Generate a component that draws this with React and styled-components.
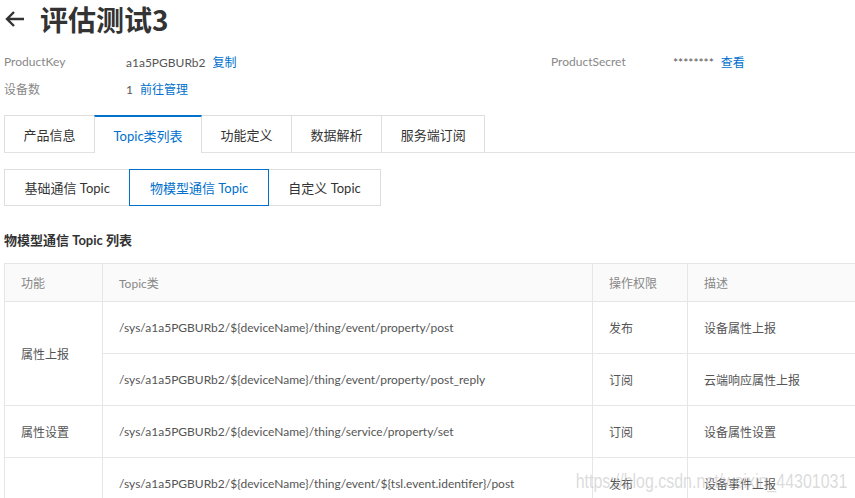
import styled, { createGlobalStyle } from 'styled-components';

const GlobalStyle = createGlobalStyle`
  html, body {
    margin: 0;
    padding: 0;
    background: #fff;
    overflow: hidden;
  }
  body {
    font-family: Lato, 'Noto Sans CJK SC', sans-serif;
    color: #333;
  }
`;

const BLUE = '#0070cc';

const mainTabs = ['产品信息', 'Topic类列表', '功能定义', '数据解析', '服务端订阅'];
const subTabs = ['基础通信 Topic', '物模型通信 Topic', '自定义 Topic'];

const rows = [
  { group: '属性上报', span: 2, topic: '/sys/a1a5PGBURb2/${deviceName}/thing/event/property/post', perm: '发布', desc: '设备属性上报' },
  { topic: '/sys/a1a5PGBURb2/${deviceName}/thing/event/property/post_reply', perm: '订阅', desc: '云端响应属性上报' },
  { group: '属性设置', span: 1, topic: '/sys/a1a5PGBURb2/${deviceName}/thing/service/property/set', perm: '订阅', desc: '设备属性设置' },
  { group: '事件上报', span: 2, topic: '/sys/a1a5PGBURb2/${deviceName}/thing/event/${tsl.event.identifer}/post', perm: '发布', desc: '设备事件上报' },
  { topic: '/sys/a1a5PGBURb2/${deviceName}/thing/event/${tsl.event.identifer}/post_reply', perm: '订阅', desc: '云端响应事件上报' },
];

export default function App() {
  return (
    <>
      <GlobalStyle />
      <Page>
        <TitleRow>
          <BackIcon width="20" height="20" viewBox="0 0 20 20">
            <path d="M19 10H2 M9 3L2 10L9 17" />
          </BackIcon>
          <Title>评估测试3</Title>
        </TitleRow>

        <InfoGrid>
          <Label>ProductKey</Label>
          <Value>
            a1a5PGBURb2<Link>复制</Link>
          </Value>
          <Label>ProductSecret</Label>
          <Value>
            ********<Link>查看</Link>
          </Value>
          <Label>设备数</Label>
          <Value>
            1<Link>前往管理</Link>
          </Value>
        </InfoGrid>

        <TabBar>
          {mainTabs.map((t, i) => (
            <Tab key={t} $active={i === 1}>
              {t}
            </Tab>
          ))}
        </TabBar>

        <SubTabBar>
          {subTabs.map((t, i) => (
            <SubTab key={t} $active={i === 1}>
              {t}
            </SubTab>
          ))}
        </SubTabBar>

        <SectionTitle>物模型通信 Topic 列表</SectionTitle>

        <Table>
          <colgroup>
            <col style={{ width: 98 }} />
            <col style={{ width: 490 }} />
            <col style={{ width: 95 }} />
            <col />
          </colgroup>
          <thead>
            <tr>
              <Th>功能</Th>
              <Th>Topic类</Th>
              <Th>操作权限</Th>
              <Th>描述</Th>
            </tr>
          </thead>
          <tbody>
            {rows.map((r, i) => (
              <tr key={i}>
                {r.group && <Td rowSpan={r.span}>{r.group}</Td>}
                <Td>{r.topic}</Td>
                <Td>{r.perm}</Td>
                <Td>{r.desc}</Td>
              </tr>
            ))}
          </tbody>
        </Table>
      </Page>
      <Watermark>https://blog.csdn.net/weixin_44301031</Watermark>
    </>
  );
}

const Page = styled.div`
  height: 498px;
  padding-left: 4px;
  overflow: hidden;
`;

const TitleRow = styled.div`
  display: flex;
  align-items: center;
  height: 38px;
`;

const BackIcon = styled.svg`
  margin-left: 1px;
  margin-right: 15px;
  fill: none;
  stroke: #333;
  stroke-width: 2.4;
`;

const Title = styled.h1`
  margin: 0;
  font-size: 28px;
  font-weight: 700;
  line-height: 38px;
  color: #333;
  font-family: 'Noto Sans CJK SC', sans-serif;
`;

const InfoGrid = styled.div`
  display: grid;
  grid-template-columns: 122px 425px 122px 1fr;
  grid-auto-rows: 27px;
  margin-top: 10px;
  font-size: 12px;
  align-items: center;
`;

const Label = styled.span`
  color: #888;
`;

const Value = styled.span`
  color: #555;
`;

const Link = styled.a`
  color: ${BLUE};
  margin-left: 7px;
  cursor: pointer;
`;

const TabBar = styled.div`
  display: flex;
  margin-top: 13px;
  border-bottom: 1px solid #e2e2e2;
  margin-right: -4px;
`;

const Tab = styled.div`
  position: relative;
  box-sizing: border-box;
  display: flex;
  align-items: center;
  height: ${(p) => (p.$active ? '38px' : '37px')};
  margin-bottom: ${(p) => (p.$active ? '-1px' : '0')};
  margin-left: -1px;
  padding: 0 18.5px;
  border: 1px solid #dedede;
  border-bottom: none;
  border-top: ${(p) => (p.$active ? `2px solid ${BLUE}` : '1px solid #dedede')};
  background: #fff;
  z-index: ${(p) => (p.$active ? 1 : 0)};
  font-size: 13px;
  color: ${(p) => (p.$active ? BLUE : '#333')};

  &:first-child {
    margin-left: 0;
  }
`;

const SubTabBar = styled.div`
  display: flex;
  margin-top: 16px;
`;

const SubTab = styled.div`
  position: relative;
  box-sizing: border-box;
  display: flex;
  align-items: center;
  height: 37px;
  padding: 0 19.5px;
  margin-left: -1px;
  border: 1px solid ${(p) => (p.$active ? BLUE : '#dedede')};
  z-index: ${(p) => (p.$active ? 1 : 0)};
  font-size: 13px;
  color: ${(p) => (p.$active ? BLUE : '#333')};

  &:first-child {
    margin-left: 0;
  }
`;

const SectionTitle = styled.div`
  margin-top: 24px;
  line-height: 20px;
  font-size: 13px;
  font-weight: 700;
  color: #333;
`;

const Table = styled.table`
  margin-top: 13px;
  width: 880px;
  border-collapse: collapse;
  table-layout: fixed;
  font-size: 12px;
`;

const Th = styled.th`
  height: 37px;
  padding: 0 16px;
  text-align: left;
  font-weight: 400;
  color: #888;
  background: #fafafa;
  border: 1px solid #e6e6e6;
`;

const Td = styled.td`
  height: 51px;
  padding: 0 16px;
  color: #555;
  border: 1px solid #e6e6e6;
  white-space: nowrap;
`;

const Watermark = styled.div`
  position: absolute;
  right: 8px;
  top: 469px;
  font-family: 'Liberation Sans', Arial, sans-serif;
  font-size: 21px;
  color: rgba(190, 190, 190, 0.55);
  transform: scaleX(0.76);
  transform-origin: right center;
  pointer-events: none;
  white-space: nowrap;
`;
